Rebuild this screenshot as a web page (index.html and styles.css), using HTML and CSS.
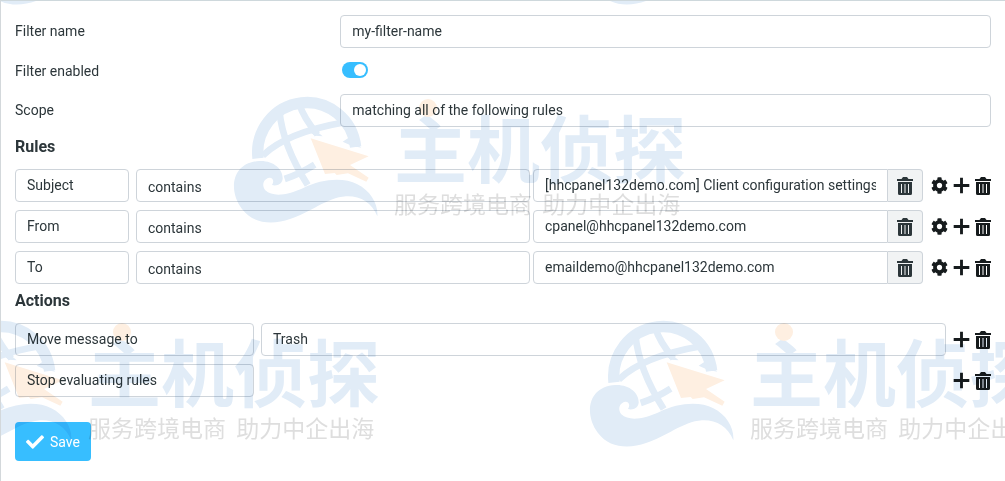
FILE: index.html
```
<!DOCTYPE html>
<html lang="en">
<head>
    <meta charset="UTF-8">
    <meta name="viewport" content="width=device-width, initial-scale=1.0">
    <title>Edit filter</title>
    <link rel="stylesheet" href="styles.css">
</head>
<body>
    <!-- shared icons -->
    <svg class="sprite" aria-hidden="true">
        <symbol id="trash" viewBox="0 0 16 18">
            <path d="M0 2h4.500L6 0h4l1.500 2H16v2H0zM1 5h14v11.500q0 1.500-1.500 1.500h-11Q1 18 1 16.500zM4 7v9h1V7zM7.500 7v9h1V7zM11 7v9h1V7z" fill-rule="evenodd"/>
        </symbol>
        <symbol id="gear" viewBox="0 0 512 512">
            <path d="M487.400 315.700l-42.600-24.600c4.300-23.200 4.300-47 0-70.200l42.600-24.600c4.900-2.800 7.100-8.600 5.500-14-11.100-35.600-30-67.800-54.700-94.600-3.800-4.100-10-5.100-14.800-2.300L380.800 110c-17.900-15.400-38.500-27.300-60.800-35.100V25.800c0-5.600-3.900-10.500-9.400-11.700-36.700-8.200-74.300-7.800-109.200 0-5.500 1.200-9.400 6.100-9.400 11.700V75c-22.200 7.900-42.800 19.800-60.800 35.100L88.700 85.500c-4.900-2.800-11-1.900-14.800 2.300-24.700 26.700-43.600 58.900-54.700 94.600-1.700 5.400.6 11.200 5.500 14L67.300 221c-4.300 23.200-4.300 47 0 70.200l-42.600 24.600c-4.900 2.800-7.100 8.600-5.500 14 11.100 35.600 30 67.800 54.700 94.600 3.800 4.100 10 5.100 14.800 2.300l42.600-24.600c17.900 15.400 38.500 27.300 60.800 35.100v49.200c0 5.600 3.900 10.500 9.400 11.700 36.700 8.200 74.300 7.800 109.200 0 5.500-1.200 9.400-6.100 9.400-11.700v-49.200c22.200-7.900 42.800-19.800 60.800-35.100l42.600 24.600c4.900 2.800 11 1.900 14.800-2.300 24.700-26.700 43.600-58.900 54.700-94.600 1.500-5.500-.7-11.300-5.600-14.100zM256 336c-44.100 0-80-35.900-80-80s35.900-80 80-80 80 35.900 80 80-35.900 80-80 80z"/>
        </symbol>
        <symbol id="plus" viewBox="0 0 16 16">
            <path d="M8 2v12M2 8h12" fill="none" stroke="currentColor" stroke-width="2.700" stroke-linecap="square"/>
        </symbol>
        <symbol id="check" viewBox="0 0 512 512">
            <path d="M173.900 439.400l-166.400-166.400c-10-10-10-26.200 0-36.200l36.200-36.200c10-10 26.200-10 36.200 0L192 312.700 432.100 72.600c10-10 26.200-10 36.200 0l36.200 36.200c10 10 10 26.200 0 36.200l-294.400 294.400c-10 10-26.200 10-36.200 0z"/>
        </symbol>
        <symbol id="globe" viewBox="39 48 435 384">
            <g fill="none" stroke="#e1ecf7">
                <path stroke-width="34" d="M114 238A147 150 0 1 1 407 204"/>
                <path stroke-width="20" d="M178 95C185 165 210 235 263 318M238 75Q250 115 292 166M128 230Q200 160 375 130M194 300Q240 285 284 257"/>
            </g>
            <path fill="#e1ecf7" d="M270 160L292 158L308 172L285 170ZM368 188L388 175L424 206L395 200ZM118 246C162 244 190 272 188 300C186 316 170 322 156 318C164 306 158 295 148 296C130 299 124 320 136 334C158 354 200 350 250 327C305 300 370 294 412 316C452 336 475 375 472 412C455 370 420 350 378 352C320 356 270 402 210 420C160 438 100 436 66 390C24 336 34 250 118 246Z"/>
            <path fill="#feefe1" d="M272 178L446 232L390 258L446 296L439 308L384 283L350 288L344 282L315 285Z"/>
        </symbol>
    </svg>

    <form class="filter-form">
        <div class="field">
            <label for="filterName">Filter name</label>
            <input type="text" class="control" id="filterName" value="my-filter-name">
        </div>
        <div class="field field-switch">
            <label for="filterEnabled">Filter enabled</label>
            <input type="checkbox" class="switch" id="filterEnabled" checked>
        </div>
        <div class="field">
            <label for="scope">Scope</label>
            <select class="control" id="scope">
                <option>matching all of the following rules</option>
            </select>
        </div>

        <h2>Rules</h2>
        <div class="rows">
            <div class="rule">
                <select class="control" aria-label="Header"><option>Subject</option></select>
                <select class="control operator" aria-label="Operator"><option>contains</option></select>
                <div class="value">
                    <input type="text" class="control" aria-label="Value" value="[hhcpanel132demo.com] Client configuration settings">
                    <button type="button" class="clear-btn" aria-label="Clear value"><svg class="trash"><use href="#trash"/></svg></button>
                </div>
                <div class="tools">
                    <button type="button" aria-label="Options"><svg><use href="#gear"/></svg></button>
                    <button type="button" aria-label="Add rule"><svg><use href="#plus"/></svg></button>
                    <button type="button" aria-label="Delete rule"><svg class="trash"><use href="#trash"/></svg></button>
                </div>
            </div>
            <div class="rule">
                <select class="control" aria-label="Header"><option>From</option></select>
                <select class="control operator" aria-label="Operator"><option>contains</option></select>
                <div class="value">
                    <input type="text" class="control" aria-label="Value" value="cpanel@hhcpanel132demo.com">
                    <button type="button" class="clear-btn" aria-label="Clear value"><svg class="trash"><use href="#trash"/></svg></button>
                </div>
                <div class="tools">
                    <button type="button" aria-label="Options"><svg><use href="#gear"/></svg></button>
                    <button type="button" aria-label="Add rule"><svg><use href="#plus"/></svg></button>
                    <button type="button" aria-label="Delete rule"><svg class="trash"><use href="#trash"/></svg></button>
                </div>
            </div>
            <div class="rule">
                <select class="control" aria-label="Header"><option>To</option></select>
                <select class="control operator" aria-label="Operator"><option>contains</option></select>
                <div class="value">
                    <input type="text" class="control" aria-label="Value" value="emaildemo@hhcpanel132demo.com">
                    <button type="button" class="clear-btn" aria-label="Clear value"><svg class="trash"><use href="#trash"/></svg></button>
                </div>
                <div class="tools">
                    <button type="button" aria-label="Options"><svg><use href="#gear"/></svg></button>
                    <button type="button" aria-label="Add rule"><svg><use href="#plus"/></svg></button>
                    <button type="button" aria-label="Delete rule"><svg class="trash"><use href="#trash"/></svg></button>
                </div>
            </div>
        </div>

        <h2>Actions</h2>
        <div class="rows">
            <div class="action">
                <select class="control" aria-label="Action"><option>Move message to</option></select>
                <select class="control" aria-label="Folder"><option>Trash</option></select>
                <div class="tools">
                    <button type="button" aria-label="Add action"><svg><use href="#plus"/></svg></button>
                    <button type="button" aria-label="Delete action"><svg class="trash"><use href="#trash"/></svg></button>
                </div>
            </div>
            <div class="action">
                <select class="control" aria-label="Action"><option>Stop evaluating rules</option></select>
                <span></span>
                <div class="tools">
                    <button type="button" aria-label="Add action"><svg><use href="#plus"/></svg></button>
                    <button type="button" aria-label="Delete action"><svg class="trash"><use href="#trash"/></svg></button>
                </div>
            </div>
        </div>

        <button type="submit" class="save-btn"><svg><use href="#check"/></svg>Save</button>
    </form>

    <!-- watermark over the page -->
    <div class="watermarks" lang="zh-CN" aria-hidden="true">
        <div class="mark mark-top-left">
            <svg><use href="#globe"/></svg>
        </div>
        <div class="mark mark-top-right">
            <svg><use href="#globe"/></svg>
        </div>
        <div class="mark mark-center">
            <svg><use href="#globe"/></svg>
            <div class="mark-text"><strong>主机侦探</strong><span>服务跨境电商&nbsp; 助力中企出海</span></div>
        </div>
        <div class="mark mark-left">
            <svg><use href="#globe"/></svg>
            <div class="mark-text"><strong>主机侦探</strong><span>服务跨境电商&nbsp; 助力中企出海</span></div>
        </div>
        <div class="mark mark-right">
            <svg><use href="#globe"/></svg>
            <div class="mark-text"><strong>主机侦探</strong><span>服务跨境电商&nbsp; 助力中企出海</span></div>
        </div>
    </div>
</body>
</html>
```
FILE: styles.css
```
* {
    box-sizing: border-box;
}

body {
    margin: 0;
    min-height: 100vh;
    position: relative;
    overflow-x: hidden;
    background-color: white;
    border-top: 1px solid #ced8dc;
    border-left: 1px solid #d3d8db;
    color: #2c363a;
    font-family: Roboto, sans-serif;
    font-size: 14px;
    line-height: 20px;
}

.sprite {
    display: none;
}

.filter-form {
    padding: 14px;
}

.field {
    display: grid;
    grid-template-columns: 1fr 2fr;
    align-items: center;
    padding-bottom: 8px;
}

.field:nth-child(3) {
    padding-bottom: 3px;
}

.field label {
    padding-bottom: 2px;
}

.field-switch {
    height: 38px;
}

.field-switch label {
    padding-bottom: 0;
}

.control {
    appearance: none;
    width: 100%;
    min-width: 0;
    height: 33px;
    padding: 0 11px 2px;
    border: 1px solid #ced4da;
    border-radius: 4px;
    background-color: white;
    color: #2c363a;
    font: inherit;
}

.operator {
    padding: 2px 11px 0;
}

.switch {
    appearance: none;
    width: 26px;
    height: 16px;
    margin: 0 2px 2px;
    padding: 2px;
    border-radius: 8px;
    background-color: #b0bec5;
    cursor: pointer;
}

.switch::before {
    content: "";
    display: block;
    width: 12px;
    height: 12px;
    border-radius: 50%;
    background-color: white;
}

.switch:checked {
    background-color: #37beff;
}

.switch:checked::before {
    margin-left: auto;
}

h2 {
    margin: 5px 0 10px;
    font-size: 16px;
    line-height: 24px;
    font-weight: bold;
}

.rows {
    display: grid;
    gap: 8px;
}

.rule {
    display: grid;
    grid-template-columns: 114px 202fr 195fr auto;
}

.rule .operator {
    width: auto;
    margin: 0 3px 0 7px;
}

.value {
    display: flex;
}

.value .control {
    border-radius: 4px 0 0 4px;
}

.clear-btn {
    display: flex;
    flex: none;
    align-items: center;
    justify-content: center;
    width: 35px;
    padding: 0;
    border: 1px solid #ced4da;
    border-left: 0;
    border-radius: 0 4px 4px 0;
    background-color: #f1f3f4;
    color: #2c363a;
    cursor: pointer;
}

.action {
    display: grid;
    grid-template-columns: 239px 1fr auto;
    column-gap: 7px;
}

.tools {
    display: flex;
    align-items: center;
    gap: 5px;
    padding-left: 8px;
}

.action .tools {
    padding-left: 0;
}

.tools button {
    display: flex;
    padding: 0;
    border: 0;
    background: none;
    color: #161b1d;
    cursor: pointer;
}

svg {
    width: 17px;
    height: 17px;
    fill: currentColor;
}

svg.trash {
    width: 16px;
    height: 18px;
}

.save-btn {
    display: flex;
    align-items: center;
    gap: 6px;
    height: 39px;
    margin-top: 25px;
    padding: 0 11px;
    border: 0;
    border-radius: 4px;
    background-color: #37beff;
    color: white;
    font: inherit;
    cursor: pointer;
}

.save-btn svg {
    width: 18px;
    height: 18px;
}

.watermarks {
    position: absolute;
    inset: 0;
    overflow: hidden;
    pointer-events: none;
    mix-blend-mode: multiply;
}

.mark {
    position: absolute;
    display: flex;
    gap: 16px;
    width: max-content;
}

.mark svg {
    width: 145px;
    height: 128px;
}

.mark-text {
    position: relative;
    padding-top: 10px;
    font-family: "Noto Sans CJK SC", sans-serif;
}

/* orange dot above the first character */
.mark-text::before {
    content: "";
    position: absolute;
    top: 4px;
    left: 25px;
    width: 18px;
    height: 18px;
    border-radius: 50%;
    background-color: #feefe1;
}

.mark-text strong {
    display: block;
    color: #e1ecf7;
    font-size: 73px;
    line-height: 80px;
    font-weight: bold;
}

.mark-text span {
    display: block;
    padding-top: 3px;
    color: #dedede;
    font-size: 23px;
    line-height: 30px;
}

.mark-top-left {
    top: -124px;
    left: -22px;
}

.mark-top-right {
    top: -124px;
    left: 588px;
}

.mark-center {
    top: 94px;
    left: 232px;
}

.mark-left {
    top: 318px;
    left: -74px;
}

.mark-right {
    top: 318px;
    left: 588px;
}
```
